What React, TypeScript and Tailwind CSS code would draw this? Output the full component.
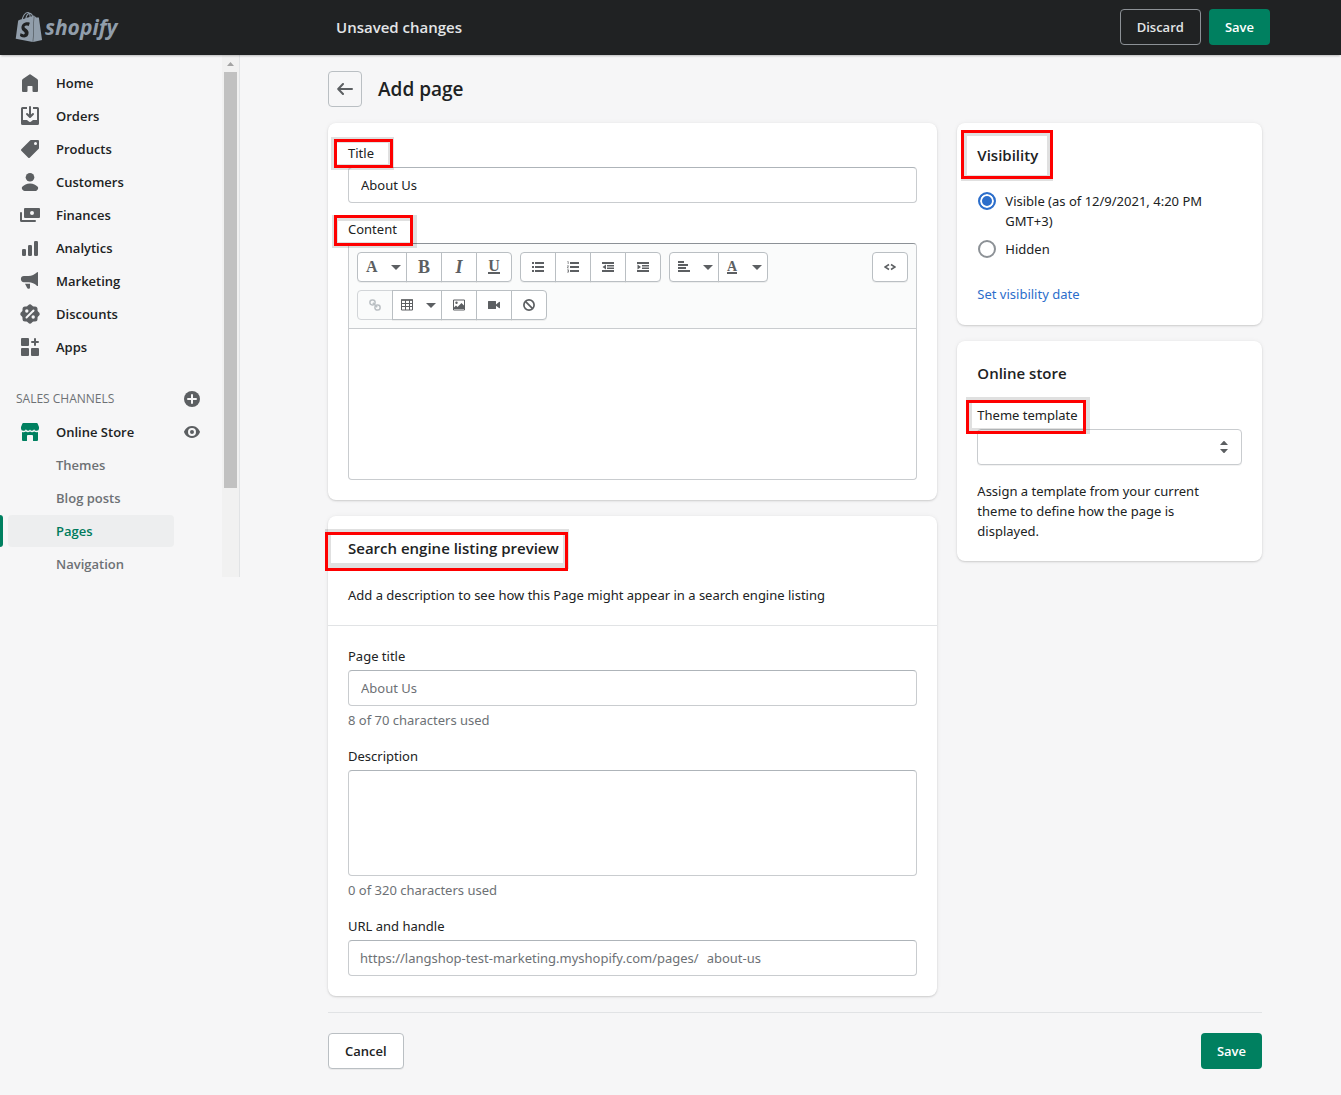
import type { ReactNode } from "react";
import { SiShopify } from "react-icons/si";

const HomeIcon = () => (
    <path d="M2 7.6c0-.6.3-1.1.8-1.5l6.6-4.7a1 1 0 0 1 1.200 0l6.6 4.7c.5.4.8.9.8 1.5V18a1 1 0 0 1-1 1h-3.500a1 1 0 0 1-1-1v-4.500a.5.5 0 0 0-.5-.5H8a.5.5 0 0 0-.5.5V18a1 1 0 0 1-1 1H3a1 1 0 0 1-1-1z" />
);

const OrdersIcon = () => (
    <>
        <path d="M11 1a1 1 0 1 0-2 0v7.586L7.707 7.293a1 1 0 0 0-1.414 1.414l3 3a1 1 0 0 0 1.414 0l3-3a1 1 0 0 0-1.414-1.414L11 8.586V1z" />
        <path d="M3 14V3h4V1H2.500A1.500 1.500 0 0 0 1 2.500v15A1.500 1.500 0 0 0 2.500 19h15a1.500 1.500 0 0 0 1.500-1.500v-15A1.500 1.500 0 0 0 17.500 1H13v2h4v11h-3.500c-.775 0-1.388.662-1.926 1.244l-.11.12A1.994 1.994 0 0 1 10 16a1.994 1.994 0 0 1-1.463-.637l-.111-.12C7.888 14.664 7.275 14 6.500 14H3z" />
    </>
);

const ProductsIcon = () => (
    <path
        fillRule="evenodd"
        d="M10.293 1.293A1 1 0 0 1 11 1h7a1 1 0 0 1 1 1v7a1 1 0 0 1-.293.707l-9 9a1 1 0 0 1-1.414 0l-7-7a1 1 0 0 1 0-1.414l9-9zM15.500 6a1.500 1.500 0 1 0 0-3 1.500 1.500 0 0 0 0 3z"
    />
);

const CustomersIcon = () => (
    <>
        <circle cx="10" cy="5.200" r="4.300" />
        <path d="M2.600 14.500C4 13.400 6.700 11.600 10 11.600s6 1.800 7.400 2.900c.9.700 1 2 .3 2.900l-1 1.100c-.3.400-.8.500-1.300.5H4.600c-.5 0-1-.2-1.300-.5l-1-1.100c-.7-.9-.6-2.200.3-2.900z" />
    </>
);

const FinancesIcon = () => (
    <>
        <path fillRule="evenodd" d="M5 3h14a1 1 0 0 1 1 1v8a1 1 0 0 1-1 1H5a1 1 0 0 1-1-1V4a1 1 0 0 1 1-1zm7 7a2 2 0 1 0 0-4 2 2 0 0 0 0 4z" />
        <path d="M1 7a1 1 0 0 1 1 1v7h13a1 1 0 1 1 0 2H1.500A1.500 1.500 0 0 1 0 15.500V8a1 1 0 0 1 1-1z" />
    </>
);

const AnalyticsIcon = () => (
    <>
        <rect x="2" y="11" width="4" height="7" rx="1.300" />
        <rect x="8" y="7" width="4" height="11" rx="1.300" />
        <rect x="14" y="3" width="4" height="15" rx="1.300" />
    </>
);

const MarketingIcon = () => (
    <>
        <path d="M4 5h4.500c3.300 0 6-1.300 8.600-3.700.4-.4.9-.1.900.4v12.800c0 .5-.5.8-.9.4-2.500-2.400-5.300-3.700-8.600-3.700H4a3.100 3.100 0 0 1 0-6.200z" />
        <path d="M5 12.700h5v3.800c0 .8-.6 1.300-1.300 1.300h-.4c-.5 0-.9-.3-1.100-.7z" />
    </>
);

const DiscountsIcon = () => (
    <>
        <rect x="2.500" y="2.500" width="15" height="15" rx="2.500" />
        <rect x="2.500" y="2.500" width="15" height="15" rx="2.500" transform="rotate(45 10 10)" />
        <path d="M6.500 13.500l7-7" stroke="#f6f6f7" strokeWidth="2" strokeLinecap="round" />
        <circle cx="6.800" cy="7" r="1.700" fill="#f6f6f7" />
        <circle cx="13.200" cy="13" r="1.700" fill="#f6f6f7" />
    </>
);

const AppsIcon = () => (
    <>
        <rect x="1" y="1" width="8" height="8" rx="1" />
        <rect x="1" y="11" width="8" height="8" rx="1" />
        <rect x="11" y="11" width="8" height="8" rx="1" />
        <path d="M14 2a1 1 0 1 1 2 0v2h2a1 1 0 1 1 0 2h-2v2a1 1 0 1 1-2 0V6h-2a1 1 0 1 1 0-2h2z" />
    </>
);

const StoreIcon = () => (
    <>
        <path d="M3.300 1h13.400c.4 0 .7.200.9.500L19 5v1.500a2.300 2.300 0 0 1-2.300 2.300h-.4A2.300 2.300 0 0 1 14.100 7.300 2.300 2.300 0 0 1 12 8.800 2.300 2.300 0 0 1 10 7.500a2.300 2.300 0 0 1-2 1.300 2.300 2.300 0 0 1-2.100-1.500 2.300 2.300 0 0 1-2.200 1.500h-.4A2.300 2.300 0 0 1 1 6.500V5l1.400-3.500c.2-.3.500-.5.9-.5z" />
        <path d="M2 10.100c1.300.4 2.700.3 3.900-.5 1.200.8 2.900.8 4.100 0 1.200.8 2.900.8 4.100 0 1.200.8 2.600.9 3.900.5V18a1 1 0 0 1-1 1h-3.500a.5.5 0 0 1-.5-.5V14a1 1 0 0 0-1-1H8a1 1 0 0 0-1 1v4.500a.5.5 0 0 1-.5.5H3a1 1 0 0 1-1-1z" />
    </>
);

const navItems = [
    { name: "Home", icon: <HomeIcon /> },
    { name: "Orders", icon: <OrdersIcon /> },
    { name: "Products", icon: <ProductsIcon /> },
    { name: "Customers", icon: <CustomersIcon /> },
    { name: "Finances", icon: <FinancesIcon /> },
    { name: "Analytics", icon: <AnalyticsIcon /> },
    { name: "Marketing", icon: <MarketingIcon /> },
    { name: "Discounts", icon: <DiscountsIcon /> },
    { name: "Apps", icon: <AppsIcon /> },
];

const storeLinks = ["Themes", "Blog posts", "Pages", "Navigation"];

const NavIcon = ({ children, className = "fill-[#5c5f62]" }: { children: ReactNode; className?: string }) => (
    <svg viewBox="0 0 20 20" className={`w-5 h-5 shrink-0 ${className}`}>
        {children}
    </svg>
);

// Red call-out frame with its grey shadow, laid over a label
const Callout = ({ frame, shadow }: { frame: string; shadow: string }) => (
    <>
        <span className={`absolute z-10 pointer-events-none border-6 border-black/12 ${shadow}`} />
        <span className={`absolute z-10 pointer-events-none border-3 border-[#fe0000] ${frame}`} />
    </>
);

const Card = ({ children }: { children: ReactNode }) => (
    <section className="bg-white rounded-lg shadow-[0_0_5px_rgba(23,24,24,0.05),0_1px_2px_rgba(0,0,0,0.15)]">
        {children}
    </section>
);

const Sidebar = () => (
    <aside className="w-60 h-[522px] shrink-0 flex overflow-hidden border-r border-[#e1e3e5]">
        <nav className="flex-1 pt-3 font-semibold font-['Open_Sans',sans-serif] text-[#202223]">
            <ul className="flex flex-col gap-px">
                {navItems.map((item) => (
                    <li key={item.name}>
                        <a href="#" className="flex items-center gap-4 h-8 pl-5">
                            <NavIcon>{item.icon}</NavIcon>
                            {item.name}
                        </a>
                    </li>
                ))}
            </ul>
            <div className="flex items-center justify-between h-8 mt-5 pl-4 pr-[22px]">
                <span className="text-xs font-normal text-[#6d7175]">SALES CHANNELS</span>
                <button type="button" aria-label="Add sales channel">
                    <svg viewBox="0 0 16 16" className="w-4 h-4">
                        <circle cx="8" cy="8" r="8" fill="#5c5f62" />
                        <path d="M8 4v8M4 8h8" stroke="#f6f6f7" strokeWidth="2" strokeLinecap="round" />
                    </svg>
                </button>
            </div>
            <div className="flex items-center justify-between h-8 mt-px pl-5 pr-[22px]">
                <a href="#" className="flex items-center gap-4">
                    <NavIcon className="fill-[#008060]">
                        <StoreIcon />
                    </NavIcon>
                    Online Store
                </a>
                <button type="button" aria-label="View your online store">
                    <svg viewBox="0 0 16 16" className="w-4 h-4">
                        <path
                            fill="#5c5f62"
                            fillRule="evenodd"
                            d="M15.900 7.600C15.800 7.400 13.800 2 8 2S.2 7.400.1 7.600a1 1 0 0 0 0 .7C.2 8.600 2.200 14 8 14s7.800-5.400 7.900-5.700a1 1 0 0 0 0-.7zM8 12a4 4 0 1 1 0-8 4 4 0 0 1 0 8zm0-6a2 2 0 1 0 0 4 2 2 0 0 0 0-4z"
                        />
                    </svg>
                </button>
            </div>
            <ul className="flex flex-col gap-px mt-px">
                {storeLinks.map((link) => (
                    <li key={link} className="flex gap-[5px]">
                        <span className={link === "Pages" ? "w-[3px] rounded-r-sm bg-[#008060]" : "w-[3px]"} />
                        <a
                            href="#"
                            className={
                                link === "Pages"
                                    ? "flex items-center w-[166px] h-8 pl-12 rounded bg-[#edeeef] text-[#007b5c]"
                                    : "flex items-center w-[166px] h-8 pl-12 text-[#6d7175]"
                            }
                        >
                            {link}
                        </a>
                    </li>
                ))}
            </ul>
        </nav>
        <div className="w-[17px] flex flex-col items-center bg-[#f1f1f1]">
            <svg viewBox="0 0 7 4" className="w-[7px] h-1 mt-[7px] mb-[6px] fill-[#a3a3a3]">
                <path d="M0 4L3.500 0 7 4z" />
            </svg>
            <div className="w-[13px] h-[416px] bg-[#c1c1c1]" />
        </div>
    </aside>
);

const Caret = () => (
    <svg viewBox="0 0 10 5" className="w-[10px] h-[5px] fill-[#5c5f62]">
        <path d="M0 0h10L5 5z" />
    </svg>
);

const ListIcon = () => (
    <svg viewBox="0 0 12 12" className="w-3 h-3 fill-[#5c5f62]">
        <path d="M0 1h2v2H0zM0 5h2v2H0zM0 9h2v2H0zM3 1h9v2H3zM3 5h9v2H3zM3 9h9v2H3z" />
    </svg>
);

const NumberedIcon = () => (
    <svg viewBox="0 0 12 12" className="w-3 h-3 fill-[#5c5f62]">
        <path d="M3 1h9v2H3zM3 5h9v2H3zM3 9h9v2H3z" />
        <path d="M.5.500h.7V3M.2 4.800h1.300L.3 6.900h1.400M.2 8.800h1.300v2.400H.2M.6 10h.9" fill="none" stroke="#5c5f62" strokeWidth=".7" />
    </svg>
);

const OutdentIcon = () => (
    <svg viewBox="0 0 12 12" className="w-3 h-3 fill-[#5c5f62]">
        <path d="M0 1h12v2H0zM5 4h7v1H5zM5 7h7v1H5zM5 4h7v1.500H5zM5 6.500h7V8H5zM0 9h12v2H0zM4 3.500v5L.5 6z" />
    </svg>
);

const IndentIcon = () => (
    <svg viewBox="0 0 12 12" className="w-3 h-3 fill-[#5c5f62]">
        <path d="M0 1h12v2H0zM5 4h7v1.500H5zM5 6.500h7V8H5zM0 9h12v2H0zM.5 3.500v5L4 6z" />
    </svg>
);

const AlignIcon = () => (
    <svg viewBox="0 0 12 12" className="w-3 h-3 fill-[#5c5f62]">
        <path d="M0 0h6v2H0zM0 3h10v2H0zM0 6h8v2H0zM0 9h12v2H0z" />
    </svg>
);

const LinkIcon = () => (
    <svg viewBox="0 0 12 12" className="w-3 h-3" fill="none" stroke="#babfc3" strokeWidth="1.500">
        <rect x=".9" y=".9" width="5.200" height="5" rx="2.300" />
        <rect x="5.900" y="6.100" width="5.200" height="5" rx="2.300" />
        <path d="M3.800 3.800l4.400 4.400" />
    </svg>
);

const TableIcon = () => (
    <svg viewBox="0 0 12 12" className="w-3 h-3" fill="none" stroke="#5c5f62">
        <path d="M.5 1h11v10H.5zM0 4.500h12M0 7.500h12M4.500 1v10M8.500 1v10" />
        <path d="M0 1h12" strokeWidth="1.500" />
    </svg>
);

const ImageIcon = () => (
    <svg viewBox="0 0 12 12" className="w-3 h-3">
        <path d="M.5 1h11v10H.5z" fill="none" stroke="#5c5f62" />
        <circle cx="3.500" cy="3.800" r="1.200" fill="#5c5f62" />
        <path d="M1 10V8.500l2-2 1.500 1.500L8.500 4 11 6.500V10z" fill="#5c5f62" />
    </svg>
);

const VideoIcon = () => (
    <svg viewBox="0 0 12 12" className="w-3 h-3 fill-[#5c5f62]">
        <path d="M.5 2h7a.5.500 0 0 1 .5.500v7a.5.500 0 0 1-.5.500h-7a.5.500 0 0 1-.5-.5v-7A.5.500 0 0 1 .5 2zM8 5.500L11 3q1-.6 1 .4v5.200q0 1-1 .4L8 6.800z" />
    </svg>
);

const ClearIcon = () => (
    <svg viewBox="0 0 12 12" className="w-3 h-3" fill="none" stroke="#5c5f62" strokeWidth="1.700">
        <circle cx="6" cy="6" r="5.100" />
        <path d="M2.400 2.400l7.200 7.200" />
    </svg>
);

const toolBase =
    "flex items-center h-[30px] -ml-px first:ml-0 border border-[#babfc3] bg-white first:rounded-l last:rounded-r shadow-[0_1px_0_rgba(0,0,0,0.05)]";
const serif = "font-['Liberation_Serif',serif] font-bold text-[#5c5f62]";

const Tool = ({ label, children }: { label: string; children: ReactNode }) => (
    <button type="button" aria-label={label} className={`${toolBase} justify-center w-9`}>
        {children}
    </button>
);

const ToolMenu = ({ label, children }: { label: string; children: ReactNode }) => (
    <button type="button" aria-label={label} className={`${toolBase} justify-between w-[50px] pl-2 pr-[5px]`}>
        {children}
        <Caret />
    </button>
);

const Toolbar = () => (
    <div className="flex flex-col gap-2 p-2 bg-[#fafbfb] border-b border-[#c9cccf] rounded-t">
        <div className="flex gap-2">
            <div className="flex">
                <ToolMenu label="Formatting">
                    <span className={`${serif} text-base`}>A</span>
                </ToolMenu>
                <Tool label="Bold">
                    <span className={`${serif} text-lg`}>B</span>
                </Tool>
                <Tool label="Italic">
                    <span className={`${serif} text-lg italic`}>I</span>
                </Tool>
                <Tool label="Underline">
                    <span className={`${serif} text-base leading-3 border-b-2 border-[#5c5f62]`}>U</span>
                </Tool>
            </div>
            <div className="flex">
                <Tool label="Bulleted list"><ListIcon /></Tool>
                <Tool label="Numbered list"><NumberedIcon /></Tool>
                <Tool label="Outdent"><OutdentIcon /></Tool>
                <Tool label="Indent"><IndentIcon /></Tool>
            </div>
            <div className="flex">
                <ToolMenu label="Alignment"><AlignIcon /></ToolMenu>
                <ToolMenu label="Color">
                    <span className={`${serif} text-sm leading-[11px] border-b-2 border-[#5c5f62]`}>A</span>
                </ToolMenu>
            </div>
            <div className="flex ml-auto">
                <Tool label="Show HTML">
                    <svg viewBox="0 0 12 8" className="w-3 h-2" fill="none" stroke="#5c5f62" strokeWidth="1.500">
                        <path d="M5 1.500L1 4l4 2.500M7 1.500l4 2.500-4 2.500" />
                    </svg>
                </Tool>
            </div>
        </div>
        <div className="flex">
            <button
                type="button"
                disabled
                aria-label="Insert link"
                className="flex items-center justify-center w-9 h-[30px] border border-[#d2d5d8] bg-[#fafbfb] rounded-l"
            >
                <LinkIcon />
            </button>
            <ToolMenu label="Insert table"><TableIcon /></ToolMenu>
            <Tool label="Insert image"><ImageIcon /></Tool>
            <Tool label="Insert video"><VideoIcon /></Tool>
            <Tool label="Clear formatting"><ClearIcon /></Tool>
        </div>
    </div>
);

const heading = "relative font-['Open_Sans',sans-serif] text-[15px] leading-6 font-semibold";
const fieldBox = "block w-full border border-[#c9cccf] border-t-[#aeb4b9] rounded bg-white";
const textField = `${fieldBox} h-9 px-3 placeholder:text-[#6d7175]`;

const ContentCard = () => (
    <Card>
        <div className="p-5">
            <label htmlFor="title" className="relative block mb-1">
                Title
                <Callout
                    frame="-left-[14px] -top-1 w-[59px] h-[29px]"
                    shadow="-left-[17px] -top-[6px] w-[63px] h-[33px]"
                />
            </label>
            <input id="title" type="text" defaultValue="About Us" className={textField} />
            <label htmlFor="content" className="relative block mt-4 mb-1">
                Content
                <Callout
                    frame="-left-[14px] -top-1 w-[79px] h-[31px]"
                    shadow="-left-4 -top-1 w-[85px] h-[33px]"
                />
            </label>
            <div className="border border-[#c9cccf] border-t-[#8c9196] rounded">
                <Toolbar />
                <textarea id="content" className="block w-full h-[150px] p-3 rounded-b resize-none" />
            </div>
        </div>
    </Card>
);

const SeoCard = () => (
    <Card>
        <div className="p-5 border-b border-[#e1e3e5]">
            <h2 className={`${heading} mb-[25px]`}>
                Search engine listing preview
                <Callout
                    frame="-left-[23px] -top-1 w-[243px] h-[39px]"
                    shadow="-left-[23px] -top-[7px] w-[244px] h-10"
                />
            </h2>
            <p>Add a description to see how this Page might appear in a search engine listing</p>
        </div>
        <div className="flex flex-col gap-4 p-5">
            <div className="flex flex-col gap-1">
                <label htmlFor="seo-title">Page title</label>
                <input id="seo-title" type="text" placeholder="About Us" className={textField} />
                <p className="text-[#6d7175]">8 of 70 characters used</p>
            </div>
            <div className="flex flex-col gap-1">
                <label htmlFor="seo-description">Description</label>
                <textarea id="seo-description" className={`${fieldBox} h-[106px] px-3 py-2 resize-none`} />
                <p className="text-[#6d7175]">0 of 320 characters used</p>
            </div>
            <div className="flex flex-col gap-1">
                <label htmlFor="handle">URL and handle</label>
                <div className={`${fieldBox} flex items-center gap-2 h-9 pl-[11px] text-[#6d7175]`}>
                    <span>https://langshop-test-marketing.myshopify.com/pages/</span>
                    <input id="handle" type="text" defaultValue="about-us" className="flex-1 min-w-0" />
                </div>
            </div>
        </div>
    </Card>
);

const radio =
    "appearance-none w-[18px] h-[18px] m-px shrink-0 rounded-full border-2 border-[#8c9196] bg-white checked:border-[#2c6ecb] checked:bg-[#2c6ecb] checked:shadow-[inset_0_0_0_2px_white]";

const VisibilityCard = () => (
    <Card>
        <div className="p-5 pb-[21px]">
            <h2 className={`${heading} mb-6`}>
                Visibility
                <Callout
                    frame="-left-4 -top-[13px] w-[92px] h-[49px]"
                    shadow="-left-4 -top-[13px] w-[92px] h-[51px]"
                />
            </h2>
            <div className="flex flex-col gap-2">
                <label className="flex items-start gap-2">
                    <input type="radio" name="visibility" defaultChecked className={radio} />
                    <span>Visible (as of 12/9/2021, 4:20 PM GMT+3)</span>
                </label>
                <label className="flex items-start gap-2">
                    <input type="radio" name="visibility" className={radio} />
                    <span>Hidden</span>
                </label>
            </div>
            <a href="#" className="inline-block mt-[25px] text-[#2c6ecb]">Set visibility date</a>
        </div>
    </Card>
);

const TemplateCard = () => (
    <Card>
        <div className="p-5">
            <h2 className={`${heading} mb-5`}>Online store</h2>
            <label htmlFor="template" className="relative block mb-1">
                Theme template
                <Callout
                    frame="-left-[11px] -top-[5px] w-[120px] h-[34px]"
                    shadow="-left-[11px] -top-2 w-[124px] h-[37px]"
                />
            </label>
            <div className="relative">
                <select
                    id="template"
                    defaultValue=""
                    className="block w-full h-9 px-3 appearance-none border border-[#c9cccf] rounded bg-white shadow-[0_1px_0_rgba(0,0,0,0.05)]"
                >
                    <option value=""></option>
                </select>
                <svg viewBox="0 0 8 12" className="absolute right-[14px] top-3 w-2 h-3 fill-[#5c5f62] pointer-events-none">
                    <path d="M0 4l3.400-3.700a.8.800 0 0 1 1.200 0L8 4zM0 8l3.400 3.700a.8.800 0 0 0 1.200 0L8 8z" />
                </svg>
            </div>
            <p className="mt-4 pr-8">Assign a template from your current theme to define how the page is displayed.</p>
        </div>
    </Card>
);

const Header = () => (
    <header className="relative z-20 flex items-center h-[55px] pb-[2px] pr-[71px] font-['Open_Sans',sans-serif] bg-[#202223] shadow-[0_2px_2px_-1px_rgba(0,0,0,0.25)]">
        <a href="#" className="flex items-center w-84 pl-[14px] gap-px text-[#919eab]">
            <SiShopify className="w-[30px] h-[30px]" />
            <span className="text-[21px] leading-6 font-bold italic">shopify</span>
        </a>
        <span className="text-[15px] font-semibold text-[#e3e5e7]">Unsaved changes</span>
        <div className="flex gap-2 ml-auto font-semibold">
            <button type="button" className="h-9 px-4 border border-[#8c9196] rounded text-[#e3e5e7]">Discard</button>
            <button type="button" className="h-9 px-4 rounded bg-[#008060] text-white">Save</button>
        </div>
    </header>
);

export default function App() {
    return (
        <div className="min-h-screen bg-[#f6f6f7] font-['Noto_Sans','Open_Sans',sans-serif] text-[13px] leading-5 text-[#202223]">
            <Header />
            <div className="flex items-start">
                <Sidebar />
                <main className="flex-1 min-w-0 pl-[88px] pr-[79px] pt-4 pb-6">
                    <div className="flex items-center gap-4 mb-4">
                        <button
                            type="button"
                            aria-label="Back"
                            className="flex items-center justify-center w-[34px] h-9 border border-[#babfc3] rounded"
                        >
                            <svg viewBox="0 0 16 12" className="w-4 h-3" fill="none" stroke="#5c5f62" strokeWidth="2" strokeLinecap="round" strokeLinejoin="round">
                                <path d="M15 6H1.500M6 1L1.200 6 6 11" />
                            </svg>
                        </button>
                        <h1 className="font-['Open_Sans',sans-serif] text-[19px] leading-7 font-semibold">Add page</h1>
                    </div>
                    <div className="grid grid-cols-[2fr_1fr] items-start gap-5">
                        <div className="flex flex-col gap-4">
                            <ContentCard />
                            <SeoCard />
                        </div>
                        <div className="flex flex-col gap-4">
                            <VisibilityCard />
                            <TemplateCard />
                        </div>
                    </div>
                    <div className="flex justify-between mt-4 pt-5 border-t border-[#e1e3e5] font-semibold font-['Open_Sans',sans-serif]">
                        <button type="button" className="h-9 px-4 border border-[#babfc3] rounded bg-white shadow-[0_1px_0_rgba(0,0,0,0.05)]">
                            Cancel
                        </button>
                        <button type="button" className="h-9 px-4 rounded bg-[#008060] text-white">Save</button>
                    </div>
                </main>
            </div>
        </div>
    );
}
